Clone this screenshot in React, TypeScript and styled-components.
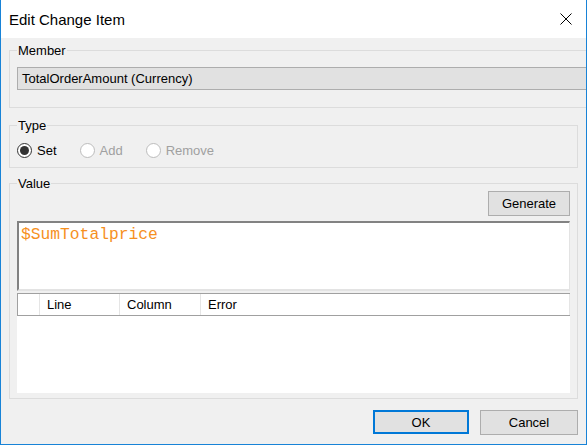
import React from 'react';
import styled, { createGlobalStyle } from 'styled-components';

const GlobalStyle = createGlobalStyle`
    html, body {
        margin: 0;
        padding: 0;
        background: #ffffff;
    }
    body {
        font-family: 'Liberation Sans', Arial, sans-serif;
        font-size: 13px;
        color: #000000;
    }
`;

const Window = styled.div`
    box-sizing: border-box;
    width: 587px;
    height: 445px;
    display: flex;
    flex-direction: column;
    background: #f0f0f0;
    border: 1px solid #1883d7;
    border-top: none;
    overflow: hidden;
`;

const TitleBar = styled.div`
    height: 38px;
    flex: none;
    display: flex;
    align-items: center;
    justify-content: space-between;
    background: #ffffff;
    padding: 0 14px 0 8px;
`;

const Title = styled.div`
    font-size: 15px;
    color: #000000;
    padding-top: 1px;
`;

const Body = styled.div`
    flex: 1;
    display: flex;
    flex-direction: column;
    padding: 5px 8px 0 8px;
    min-width: 0;
`;

const Group = styled.fieldset<{ $wide?: boolean; $gap: number }>`
    margin: 0 ${(p) => (p.$wide ? '-40px' : '0')} ${(p) => p.$gap}px 0;
    padding: 0 7px 5px 7px;
    border: 1px solid #dcdcdc;
    min-width: 0;
    display: flex;
    flex-direction: column;
`;

const Legend = styled.legend`
    padding: 0 1px;
    line-height: 15px;
    font-size: 13px;
`;

const MemberField = styled.div`
    margin-top: 9px;
    height: 23px;
    box-sizing: border-box;
    display: flex;
    align-items: center;
    padding-left: 4px;
    background: #e1e1e1;
    border: 1px solid #adadad;
    margin-bottom: 12px;
`;

const RadioRow = styled.div`
    display: flex;
    gap: 23px;
    height: 15px;
    margin-top: 10px;
    margin-bottom: 4px;
`;

const RadioItem = styled.label<{ $disabled?: boolean }>`
    display: flex;
    align-items: center;
    gap: 5px;
    color: ${(p) => (p.$disabled ? '#a0a0a0' : '#000000')};
    font-size: 13px;
`;

const RadioCircle = styled.span<{ $checked?: boolean; $disabled?: boolean }>`
    box-sizing: border-box;
    width: 15px;
    height: 15px;
    border-radius: 50%;
    background: #ffffff;
    border: 1px solid ${(p) => (p.$disabled ? '#bcbcbc' : '#333333')};
    display: flex;
    align-items: center;
    justify-content: center;

    &::after {
        content: '';
        display: ${(p) => (p.$checked ? 'block' : 'none')};
        width: 9px;
        height: 9px;
        border-radius: 50%;
        background: #333333;
    }
`;

const GenerateRow = styled.div`
    display: flex;
    justify-content: flex-end;
`;

const Button = styled.button<{ $width: number; $default?: boolean }>`
    box-sizing: border-box;
    width: ${(p) => p.$width}px;
    height: ${(p) => (p.$default ? 24 : 25)}px;
    background: #e1e1e1;
    border: ${(p) => (p.$default ? '2px solid #0078d7' : '1px solid #adadad')};
    font-family: 'Liberation Sans', Arial, sans-serif;
    font-size: 13px;
    color: #000000;
    padding: 0;
    margin: 0;
`;

const Editor = styled.div`
    margin-top: 5px;
    height: 70px;
    box-sizing: border-box;
    background: #ffffff;
    border-top: 2px solid #828282;
    border-left: 2px solid #828282;
    border-right: 1px solid #e3e3e3;
    border-bottom: 2px solid #e3e3e3;
    padding: 2px 0 0 2px;
    font-family: 'Liberation Mono', 'Courier New', monospace;
    font-size: 16.3px;
    color: #f6901e;
`;

const Grid = styled.div`
    margin-top: 2px;
    height: 100px;
    background: #ffffff;
    display: flex;
    flex-direction: column;
`;

const HeaderRow = styled.div`
    display: flex;
    height: 21px;
    border-top: 1px solid #a0a0a0;
    border-left: 1px solid #a0a0a0;
    border-bottom: 1px solid #a0a0a0;
`;

const HeaderCell = styled.div<{ $width?: number }>`
    box-sizing: border-box;
    ${(p) => (p.$width ? `width: ${p.$width}px;` : 'flex: 1;')}
    border-right: 1px solid #e5e5e5;
    display: flex;
    align-items: center;
    padding-left: 7px;
    font-size: 13px;
`;

const ButtonBar = styled.div`
    display: flex;
    justify-content: flex-end;
    gap: 11px;
    margin-top: 11px;
`;

const CloseIcon = () => (
    <svg width="12" height="12" viewBox="0 0 12 12">
        <path d="M0.5 0.5 L11.5 11.5 M11.5 0.5 L0.5 11.5" stroke="#000" strokeWidth="1" fill="none" />
    </svg>
);

const radios = [
    { label: 'Set', checked: true, disabled: false },
    { label: 'Add', checked: false, disabled: true },
    { label: 'Remove', checked: false, disabled: true },
];

const App = () => {
    return (
        <>
            <GlobalStyle />
            <Window>
                <TitleBar>
                    <Title>Edit Change Item</Title>
                    <CloseIcon />
                </TitleBar>
                <Body>
                    <Group $wide $gap={10}>
                        <Legend>Member</Legend>
                        <MemberField>TotalOrderAmount (Currency)</MemberField>
                    </Group>
                    <Group $gap={8}>
                        <Legend>Type</Legend>
                        <RadioRow>
                            {radios.map((r) => (
                                <RadioItem key={r.label} $disabled={r.disabled}>
                                    <RadioCircle $checked={r.checked} $disabled={r.disabled} />
                                    {r.label}
                                </RadioItem>
                            ))}
                        </RadioRow>
                    </Group>
                    <Group $gap={0}>
                        <Legend>Value</Legend>
                        <GenerateRow>
                            <Button $width={82}>Generate</Button>
                        </GenerateRow>
                        <Editor>$SumTotalprice</Editor>
                        <Grid>
                            <HeaderRow>
                                <HeaderCell $width={22} />
                                <HeaderCell $width={80}>Line</HeaderCell>
                                <HeaderCell $width={81}>Column</HeaderCell>
                                <HeaderCell>Error</HeaderCell>
                            </HeaderRow>
                        </Grid>
                    </Group>
                    <ButtonBar>
                        <Button $width={96} $default>
                            OK
                        </Button>
                        <Button $width={98}>Cancel</Button>
                    </ButtonBar>
                </Body>
            </Window>
        </>
    );
};

export default App;
